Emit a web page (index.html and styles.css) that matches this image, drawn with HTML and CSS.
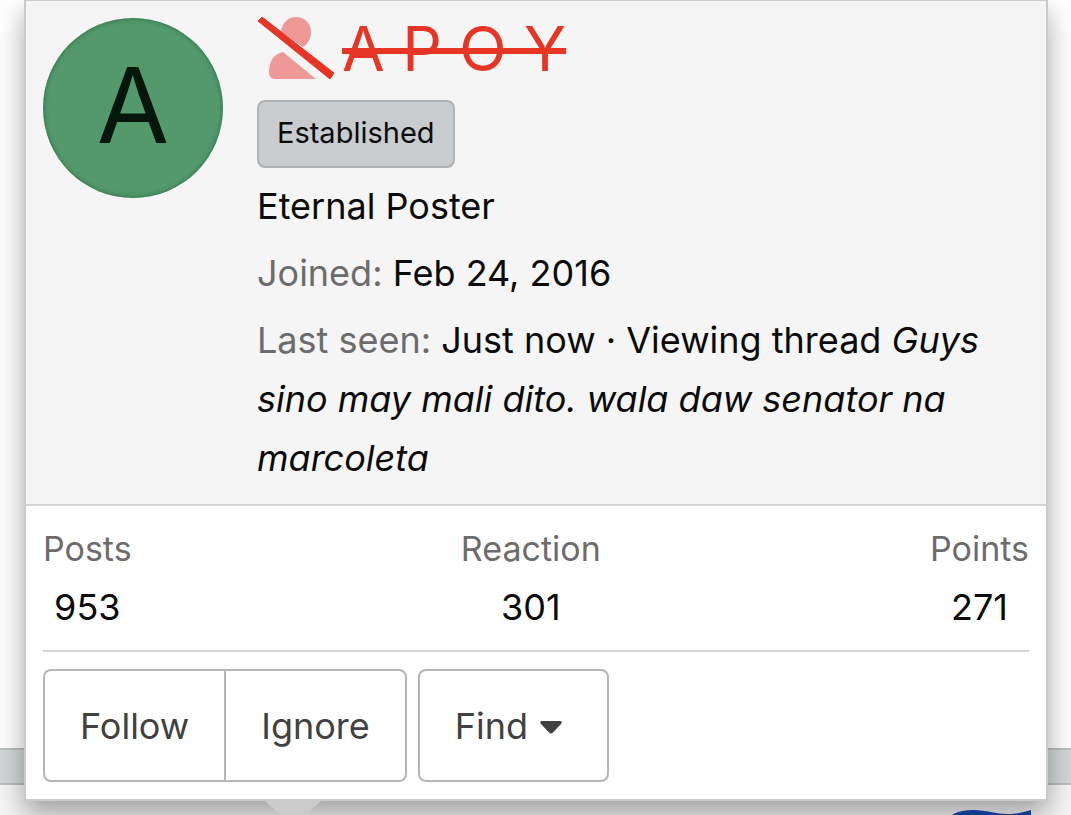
FILE: index.html
```html
<!DOCTYPE html>
<html lang="en">
<head>
<meta charset="utf-8">
<meta name="viewport" content="width=device-width, initial-scale=1">
<title>Member card</title>
<link rel="stylesheet" href="styles.css">
</head>
<body>
<div class="page">
  <div class="backdrop" aria-hidden="true">
    <div class="backdrop-post"></div>
    <div class="backdrop-bar"></div>
    <div class="backdrop-next">
      <svg class="flag" viewBox="0 0 80 6" width="80" height="6"><path d="M0 6C6 2 14 1 22 1C34 1 44 5 56 5C66 5 72 3 79 1V6Z" fill="#123a8f"/></svg>
    </div>
  </div>
  <article class="card">
    <header class="card-header">
      <div class="avatar">A</div>
      <div class="info">
        <h1 class="name">
          <svg class="banned-icon" viewBox="0 0 78 64" width="78" height="64" aria-label="Banned"><g fill="#ee9898"><path d="M24 15C25 6 31 0 39 0C47 0 54 6 54 15C54 21 51 27 46 30Z"/><path d="M26 35L59 62H18C14 62 12 59 12 55C12 44 17 37 26 35Z"/></g><path d="M1 4L5 0L77 56L73 62Z" fill="#e63425" stroke="#e63425" stroke-width="1" stroke-linejoin="round"/></svg>
          <a class="name-link" href="#member">A P O Y</a>
        </h1>
        <div><span class="badge">Established</span></div>
        <p class="line">Eternal Poster</p>
        <p class="line"><span class="label">Joined:</span> Feb 24, 2016</p>
        <p class="line activity"><span class="label">Last seen:</span> Just now · Viewing thread <em>Guys sino may mali dito. wala daw senator na marcoleta</em></p>
      </div>
    </header>
    <div class="card-body">
      <dl class="stats">
        <div class="stat"><dt>Posts</dt><dd>953</dd></div>
        <div class="stat"><dt>Reaction</dt><dd>301</dd></div>
        <div class="stat"><dt>Points</dt><dd>271</dd></div>
      </dl>
      <div class="actions">
        <div class="group">
          <button class="button" type="button">Follow</button>
          <button class="button" type="button">Ignore</button>
        </div>
        <button class="button menu-button" type="button">Find <svg class="caret" viewBox="0 0 22 13" width="22" height="13"><path d="M2 0H20Q23 0 21 3L13 11.500Q11 13.500 9 11.500L1 3Q-1 0 2 0Z" fill="#414141"/></svg></button>
      </div>
    </div>
    <div class="pointer"></div>
  </article>
</div>
</body>
</html>
```

FILE: styles.css
```css
* { box-sizing: border-box; }

body {
  margin: 0;
  font-family: Inter, "Noto Sans", sans-serif;
  font-size: 36px;
  line-height: 58px;
  color: #0b0b0b;
  background: #fff;
}

.page {
  position: relative;
  min-height: 100vh;
  padding: 0 23px 14px 24px;
  overflow: hidden;
}

.backdrop {
  position: absolute;
  inset: 0;
  display: flex;
  flex-direction: column;
}
.backdrop-post { flex: 1; background: #fff; }
.backdrop-bar {
  height: 37px;
  background: #d3d7d7;
  border: solid #bcbfbf;
  border-width: 2px 0;
}
.backdrop-next {
  height: 30px;
  display: flex;
  justify-content: flex-end;
  align-items: flex-end;
  padding-right: 39px;
  background: #f5f5f5;
}
.flag { display: block; position: relative; z-index: 1; }

.card {
  position: relative;
  background: #fff;
  border: 2px solid #cbcbcb;
  border-top-width: 1px;
  box-shadow: 0 13px 26px rgba(0, 0, 0, 0.35);
}

.card-header {
  display: flex;
  gap: 34px;
  padding: 17px 17px 16px;
  background: #f5f5f5;
  border-bottom: 2px solid #d4d4d4;
}

.avatar {
  flex: none;
  width: 180px;
  height: 180px;
  border-radius: 50%;
  background: #53996b;
  box-shadow: inset 0 0 5px rgba(0, 60, 30, 0.5);
  color: #04170a;
  font-size: 105px;
  line-height: 174px;
  text-align: center;
}

.info { flex: 1; min-width: 0; }

.name {
  display: flex;
  align-items: center;
  gap: 7px;
  height: 62px;
  margin: 0 0 20px;
  font-size: 62px;
  line-height: 62px;
  font-weight: 400;
}
.banned-icon { flex: none; }
.name-link {
  color: #e63425;
  text-decoration: line-through;
  text-decoration-thickness: 6px;
}

.badge {
  display: block;
  width: fit-content;
  padding: 0 18px 2px;
  border: 2px solid #b0b3b5;
  border-radius: 8px;
  background: #c8cccf;
  font-size: 29px;
  line-height: 62px;
}

.line { margin: 9px 0 0; }
.activity { line-height: 59px; }
.label { color: #6c6c6c; }

.card-body { padding: 14px 17px 17px; }

.stats {
  display: flex;
  justify-content: space-between;
  margin: 0;
  padding-bottom: 14px;
  border-bottom: 2px solid #d4d4d4;
  text-align: center;
}
.stat dt { color: #6c6c6c; font-size: 34px; }
.stat dd { margin: 0; }

.actions { display: flex; gap: 11px; padding-top: 17px; }
.group { display: flex; }

.button {
  display: flex;
  align-items: center;
  gap: 12px;
  height: 113px;
  padding: 0 35px;
  border: 2px solid #b5b5b5;
  border-radius: 8px;
  background: #fff;
  color: #414141;
  font: inherit;
}
.group .button:first-child { border-right: 0; border-radius: 8px 0 0 8px; }
.group .button:last-child { border-radius: 0 8px 8px 0; }
.menu-button { padding-right: 45px; }
.caret { display: block; margin-top: 4px; }

.pointer {
  position: absolute;
  top: 100%;
  left: 237px;
  width: 60px;
  height: 28px;
  background: #cbcbcb;
  clip-path: polygon(0 0, 100% 0, 50% 100%);
}
```
